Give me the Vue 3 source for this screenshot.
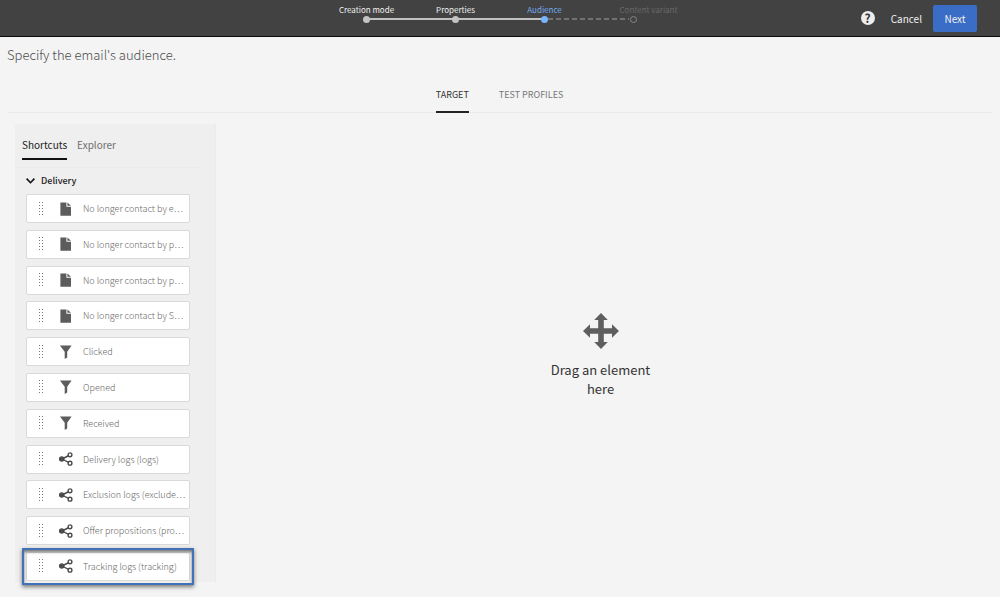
<script setup>
import { ref } from 'vue'

const steps = [
  { label: 'Creation mode', state: 'done' },
  { label: 'Properties', state: 'done' },
  { label: 'Audience', state: 'current' },
  { label: 'Content variant', state: 'todo' },
]

const shortcuts = [
  { label: 'No longer contact by e⋯', icon: 'file' },
  { label: 'No longer contact by p⋯', icon: 'file' },
  { label: 'No longer contact by p⋯', icon: 'file' },
  { label: 'No longer contact by S⋯', icon: 'file' },
  { label: 'Clicked', icon: 'funnel' },
  { label: 'Opened', icon: 'funnel' },
  { label: 'Received', icon: 'funnel' },
  { label: 'Delivery logs (logs)', icon: 'share' },
  { label: 'Exclusion logs (exclude⋯', icon: 'share' },
  { label: 'Offer propositions (pro⋯', icon: 'share' },
  { label: 'Tracking logs (tracking)', icon: 'share', highlighted: true },
]

const view = ref('target')
const source = ref('shortcuts')
const open = ref(true)
</script>

<template>
  <div class="page">
    <header class="topbar">
      <div class="side"></div>
      <ol class="steps">
        <li v-for="s in steps" :key="s.label" :class="['step', s.state]">
          <span class="step-label">{{ s.label }}</span>
          <span class="dot"></span>
        </li>
      </ol>
      <div class="side actions">
        <button class="help" type="button" aria-label="Help">?</button>
        <button class="cancel" type="button">Cancel</button>
        <button class="next" type="button">Next</button>
      </div>
    </header>

    <main class="main">
      <h1 class="title">Specify the email's audience.</h1>

      <nav class="view-tabs">
        <button type="button" :class="{ active: view === 'target' }" @click="view = 'target'">TARGET</button>
        <button type="button" :class="{ active: view === 'test' }" @click="view = 'test'">TEST PROFILES</button>
      </nav>

      <div class="workspace">
        <aside class="palette">
          <nav class="palette-tabs">
            <button type="button" :class="{ active: source === 'shortcuts' }" @click="source = 'shortcuts'">Shortcuts</button>
            <button type="button" :class="{ active: source === 'explorer' }" @click="source = 'explorer'">Explorer</button>
          </nav>
          <button class="group" type="button" :aria-expanded="open" @click="open = !open">
            <svg width="9" height="6" viewBox="0 0 9 6"><path d="M.6.6 4.5 4.7 8.4.6" fill="none" stroke="#111" stroke-width="1.6" /></svg>
            Delivery
          </button>
          <ul v-if="open" class="list">
            <li v-for="(item, i) in shortcuts" :key="i" :class="['card', { highlighted: item.highlighted }]" draggable="true">
              <svg class="grip" width="6" height="14" viewBox="0 0 6 14">
                <g fill="#777">
                  <template v-for="r in 5" :key="r">
                    <rect x="1" :y="r * 3 - 3" width="1" height="1" />
                    <rect x="4" :y="r * 3 - 3" width="1" height="1" />
                  </template>
                </g>
              </svg>
              <svg class="icon" width="14" height="14" viewBox="0 0 14 14">
                <path v-if="item.icon === 'file'" d="M1.4.4H7.4V4.8H12V13.8H1.4ZM8.4.4 12 3.8H8.4Z" fill="#5c5c5c" />
                <path v-else-if="item.icon === 'funnel'" d="M.9.4H12.6L8.2 6.8V12.4L5.7 14V6.8Z" fill="#5c5c5c" />
                <g v-else stroke="#4b4b4b" stroke-width="1.4">
                  <path d="M3 7 11 3M3 7 11 11.2" />
                  <circle cx="2.7" cy="7" r="2.1" fill="#4b4b4b" />
                  <circle cx="11" cy="2.8" r="1.9" fill="#fff" />
                  <circle cx="11" cy="11.2" r="1.9" fill="#fff" />
                </g>
              </svg>
              <span class="card-label">{{ item.label }}</span>
            </li>
          </ul>
        </aside>

        <section class="dropzone">
          <svg width="36" height="36" viewBox="0 0 36 36">
            <path d="M18 0 24.8 7H20.8V15.2H29V11.2L36 18 29 24.8V20.8H20.8V29H24.8L18 36 11.2 29H15.2V20.8H7V24.8L0 18 7 11.2V15.2H15.2V7H11.2Z" fill="#5e5e5e" />
          </svg>
          <p>Drag an element here</p>
        </section>
      </div>
    </main>
  </div>
</template>

<style>
body {
  margin: 0;
  background: #f4f4f4;
}
</style>

<style scoped>
.page {
  min-height: 100vh;
  display: flex;
  flex-direction: column;
  font-family: "Noto Sans CJK JP", "Noto Sans", sans-serif;
  color: #4b4b4b;
  background: #f4f4f4;
}
button {
  font: inherit;
  color: inherit;
  background: none;
  border: 0;
  padding: 0;
  cursor: pointer;
}
ol, ul {
  list-style: none;
  margin: 0;
  padding: 0;
}
svg {
  display: block;
  flex: none;
}
.topbar {
  display: flex;
  height: 36px;
  background: #424242;
  border-bottom: 1px solid #0c0c0c;
}
.side {
  flex: 1;
  padding: 0 23px;
}
.steps {
  display: flex;
}
.step {
  position: relative;
  width: 89px;
  padding-top: 4px;
  display: flex;
  flex-direction: column;
  align-items: center;
  font-size: 8px;
  line-height: 12px;
  color: #f0f0f0;
}
.step-label {
  white-space: nowrap;
}
.dot {
  width: 7px;
  height: 7px;
  box-sizing: border-box;
  border-radius: 50%;
  background: #c4c4c4;
  position: relative;
}
.step + .step::before {
  content: "";
  position: absolute;
  top: 18px;
  right: 50%;
  width: 100%;
  height: 2px;
  background: #c0c0c0;
}
.step.current {
  color: #73aaf0;
}
.current .dot {
  background: #78b4ff;
}
.step.todo {
  color: #696969;
}
.step.todo .step-label {
  padding-left: 30px;
}
.step.todo::before {
  width: 81px;
  right: 49px;
  background: repeating-linear-gradient(90deg, #717171 0 5px, transparent 5px 8px);
}
.todo .dot {
  background: #424242;
  border: 1px solid #858585;
}
.actions {
  display: flex;
  align-items: center;
  justify-content: flex-end;
  font-size: 10px;
  color: #f0f0f0;
}
.help {
  width: 14px;
  height: 14px;
  border-radius: 50%;
  background: #ededed;
  color: #333;
  font-size: 12px;
  font-weight: 700;
  line-height: 14px;
}
.cancel {
  margin: 0 11px 0 16px;
}
.next {
  width: 44px;
  height: 27px;
  border-radius: 2px;
  background: #3a6dc5;
}
.main {
  flex: 1;
  display: flex;
  flex-direction: column;
  padding: 0 8px 15px 7px;
}
.title {
  margin: 8px 0 0;
  font-size: 13px;
  line-height: 20px;
  font-weight: 300;
}
.view-tabs {
  display: flex;
  justify-content: center;
  gap: 30px;
  margin-top: 20px;
  border-bottom: 1px solid #ebebeb;
  font-size: 9px;
  line-height: 20px;
  color: #777;
}
.view-tabs button {
  height: 28px;
  padding-bottom: 6px;
  margin-bottom: -1px;
  border-bottom: 2px solid transparent;
}
.view-tabs .active {
  color: #333;
  border-color: #222;
}
.workspace {
  flex: 1;
  display: flex;
  padding: 11px 7px 0 8px;
}
.palette {
  width: 201px;
  box-sizing: border-box;
  padding-top: 12px;
  background: #efefef;
  border-right: 1px solid #ebebeb;
  display: flex;
  flex-direction: column;
}
.palette-tabs {
  display: flex;
  gap: 10px;
  height: 31px;
  padding-left: 7px;
  margin-right: 15px;
  border-bottom: 1px solid #eaeaea;
  font-size: 10px;
  line-height: 18px;
  color: #6e6e6e;
}
.palette-tabs button {
  height: 24px;
  padding-bottom: 4px;
  border-bottom: 2px solid transparent;
}
.palette-tabs .active {
  color: #222;
  border-color: #111;
}
.group {
  display: flex;
  align-items: center;
  gap: 6px;
  margin: 4px 0 4px 11px;
  font-size: 9px;
  line-height: 18px;
  font-weight: 500;
  color: #222;
}
.list {
  flex: 1;
  display: flex;
  flex-direction: column;
  justify-content: space-between;
  gap: 4px;
  margin: 0 25px 1px 11px;
}
.card {
  position: relative;
  display: flex;
  align-items: center;
  height: 27px;
  padding-left: 11px;
  background: #fff;
  border: 1px solid #d9d9d9;
  border-radius: 2px;
  font-size: 9px;
  font-weight: 300;
  color: #666;
}
.icon {
  margin: 0 10px 0 15px;
}
.card-label {
  white-space: nowrap;
}
.highlighted::after {
  content: "";
  position: absolute;
  inset: -5px;
  border: 2px solid #4271b7;
  box-shadow: 0 2px 4px rgba(0, 0, 0, .5), inset 0 2px 3px rgba(0, 0, 0, .5);
  pointer-events: none;
}
.dropzone {
  flex: 1;
  display: flex;
  flex-direction: column;
  align-items: center;
  justify-content: center;
  padding-top: 5px;
}
.dropzone p {
  width: 110px;
  margin: 11px 0 0;
  font-size: 13px;
  line-height: 19px;
  text-align: center;
  color: #333;
}
</style>
